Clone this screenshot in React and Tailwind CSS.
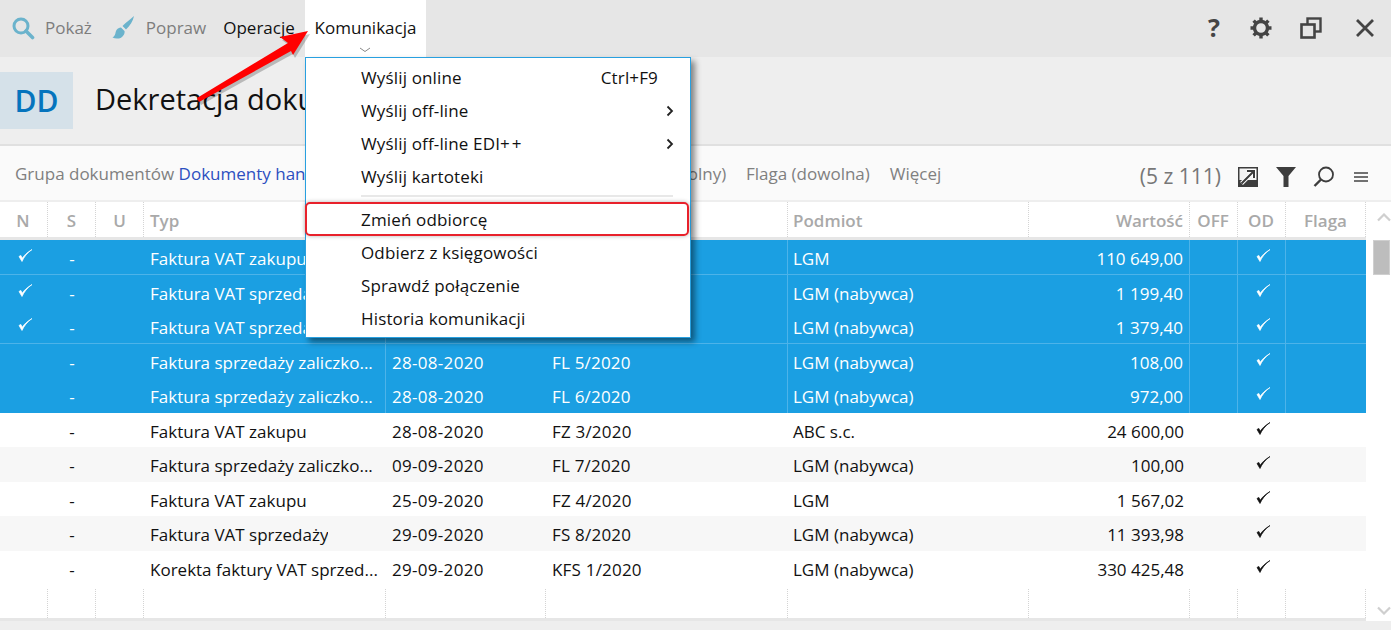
import React from "react";

const cols = "grid-cols-[48px_48px_48px_242px_160px_242px_241px_161px_48px_48px_80px]";
const rows = [
  ["✓","Faktura VAT zakupu","","","LGM","110 649,00",1,"b"],
  ["✓","Faktura VAT sprzedaży","","","LGM (nabywca)","1 199,40",1,""],
  ["✓","Faktura VAT sprzedaży","","","LGM (nabywca)","1 379,40",1,"b"],
  ["","Faktura sprzedaży zaliczko...","28-08-2020","FL 5/2020","LGM (nabywca)","108,00",1,""],
  ["","Faktura sprzedaży zaliczko...","28-08-2020","FL 6/2020","LGM (nabywca)","972,00",1,""],
  ["","Faktura VAT zakupu","28-08-2020","FZ 3/2020","ABC s.c.","24 600,00",0,""],
  ["","Faktura sprzedaży zaliczko...","09-09-2020","FL 7/2020","LGM (nabywca)","100,00",0,"a"],
  ["","Faktura VAT zakupu","25-09-2020","FZ 4/2020","LGM","1 567,02",0,""],
  ["","Faktura VAT sprzedaży","29-09-2020","FS 8/2020","LGM (nabywca)","11 393,98",0,"a"],
  ["","Korekta faktury VAT sprzed...","29-09-2020","KFS 1/2020","LGM (nabywca)","330 425,48",0,""],
];

const Check = ({ white }) => (
  <svg width="16" height="16" viewBox="0 0 16 16" className="-mt-[5px] ml-[3px]">
    <path d="M2 8.5 L5 13.5 C7 9 10 5 15 1.5 C10 4.5 7 7.5 5.3 10.2 L3.8 7.4 Z" fill={white ? "#fff" : "#111"} stroke={white ? "#fff" : "#111"} strokeWidth="0.7" strokeLinejoin="round" />
  </svg>
);

const Dotted = "border-r border-dotted border-[#d4d4d4]";

function Header() {
  const h = "flex items-center h-full pt-[3px] text-[17px] font-semibold text-[#a9a9a9] " + Dotted;
  return (
    <div className={`grid ${cols} h-[35px] w-[1366px] border-b-[3px] border-[#e6e6e6] box-content`}>
      <div className={`${h} justify-center pr-[1px]`}>N</div>
      <div className={`${h} justify-center`}>S</div>
      <div className={`${h} justify-center`}>U</div>
      <div className={`${h} pl-[6px]`}>Typ</div>
      <div className={h}></div>
      <div className={h}></div>
      <div className={`${h} pl-[5px]`}>Podmiot</div>
      <div className={`${h} justify-end pr-[6px]`}>Wartość</div>
      <div className={`${h} justify-center pr-[1px]`}>OFF</div>
      <div className={`${h} justify-center pr-[1px]`}>OD</div>
      <div className={`${h} justify-center`}>Flaga</div>
    </div>
  );
}

function Row({ r }) {
  const [n, typ, date, num, pod, val, sel, mod] = r;
  const bg = sel ? "bg-[#1b9fe2] text-white" : mod === "a" ? "bg-[#f7f7f7] text-[#111]" : "bg-white text-[#111]";
  const line = sel ? "border-r border-[#4db3e9]" : "";
  const bottom = mod === "b" ? "border-b border-[#4db3e9]" : "";
  return (
    <div className={`grid ${cols} h-[34.5px] items-stretch w-[1366px] text-[17px] ${bg} ${bottom}`}>
      <div className="flex items-center justify-center pt-[3px] pr-[1px]">{n && <Check white />}</div>
      <div className="flex items-center justify-center pt-[3px]">-</div>
      <div></div>
      <div className={`flex items-center pt-[3px] pl-[6px] ${line}`}><span className="whitespace-nowrap overflow-hidden">{typ}</span></div>
      <div className="flex items-center pt-[3px] pl-[6px] tracking-[0.3px]">{date}</div>
      <div className={`flex items-center pt-[3px] pl-[6px] tracking-[0.2px] ${line}`}>{num}</div>
      <div className="flex items-center pt-[3px] pl-[5px]">{pod}</div>
      <div className={`flex items-center justify-end pt-[3px] pr-[6px] ${line}`}>{val}</div>
      <div className={line}></div>
      <div className={`flex items-center justify-center pt-[3px] pr-[1px] ${line}`}><Check white={!!sel} /></div>
      <div></div>
    </div>
  );
}

const menu = [
  ["Wyślij online","Ctrl+F9"],
  ["Wyślij off-line",">"],
  [<>Wyślij off-line EDI<span className="tracking-[2px]">++</span></>,">"],
  ["Wyślij kartoteki",""],
];
const menu2 = ["Zmień odbiorcę","Odbierz z księgowości","Sprawdź połączenie","Historia komunikacji"];

function MenuItem({ label, right }) {
  return (
    <div className="flex items-center justify-between h-[33px] pl-[55px] pr-[16px] text-[17px] tracking-[0.15px] text-[#111]">
      <span>{label}</span>
      {right === ">" ? (
        <svg width="8" height="12" viewBox="0 0 8 12"><path d="M1.5 1.5 L6 6 L1.5 10.5" fill="none" stroke="#222" strokeWidth="1.8" /></svg>
      ) : (
        <span className="pr-[16px]">{right}</span>
      )}
    </div>
  );
}

export default function App() {
  return (
    <div className="relative w-[1391px] h-[630px] overflow-hidden bg-white font-['Open_Sans','Noto_Sans',sans-serif]">
      {/* top bar */}
      <div className="flex items-stretch h-[57px] bg-[#e6e6e6]">
        <div className="flex items-center w-[305px] h-full pb-[1px] text-[17px] whitespace-nowrap">
          <svg width="24" height="24" viewBox="0 0 24 24" className="ml-[11px]">
            <circle cx="10" cy="10" r="7" fill="none" stroke="#6bb3cc" strokeWidth="3" />
            <path d="M15 15 L21.5 21.5" stroke="#6bb3cc" strokeWidth="3.6" strokeLinecap="round" />
          </svg>
          <span className="ml-[10px] text-[#7d7d7d]">Pokaż</span>
          <svg width="24" height="24" viewBox="0 0 24 24" className="ml-[19px]">
            <path d="M23 0 C20 3 15 6 11.5 10 L15 13.5 C19 9.5 22 5 23 0 Z" fill="#6bb3cc" />
            <path d="M10 11.5 C6 12 5 14.5 4.5 17 C4 19.5 3 20.5 1.5 21.5 C5 23.5 11 23 13 18.5 C13.6 17 13.8 16 13.5 15 Z" fill="#6bb3cc" />
          </svg>
          <span className="ml-[11px] text-[#7d7d7d]">Popraw</span>
          <span className="ml-[17px] text-[#111]">Operacje</span>
        </div>
        <div className="relative w-[121px] bg-white flex justify-center items-center pb-[1px] text-[17px] text-[#111]">
          Komunikacja
          <svg width="12" height="6" viewBox="0 0 12 6" className="absolute left-[54px] top-[47px]">
            <path d="M1 1 L6 4.5 L11 1" fill="none" stroke="#888" strokeWidth="1" />
          </svg>
        </div>
        <div className="ml-auto flex items-center h-full pb-[1px]">
          <span className="w-[24px] text-center text-[25px] font-bold text-[#444]">?</span>
          <svg width="24" height="24" viewBox="0 0 24 24" className="ml-[23px]" fill="none">
            <circle cx="12" cy="12" r="6.5" stroke="#444" strokeWidth="3.4" />
            <path d="M12 1.5 V5 M12 19 V22.5 M1.5 12 H5 M19 12 H22.5 M4.6 4.6 L7 7 M17 17 L19.4 19.4 M19.4 4.6 L17 7 M7 17 L4.6 19.4" stroke="#444" strokeWidth="3.4" />
          </svg>
          <svg width="22" height="22" viewBox="0 0 22 22" className="ml-[27px]" fill="none">
            <rect x="7.5" y="1.5" width="13" height="13" stroke="#444" strokeWidth="2.4" />
            <rect x="1.5" y="7.5" width="13" height="13" fill="#e6e6e6" stroke="#444" strokeWidth="2.6" />
          </svg>
          <svg width="20" height="20" viewBox="0 0 20 20" className="ml-[33px] mr-[16px]">
            <path d="M2 2 L18 18 M18 2 L2 18" stroke="#444" strokeWidth="2.8" />
          </svg>
        </div>
      </div>

      {/* title */}
      <div className="flex h-[89px] pt-[15px] bg-[#eeeeee] border-b-2 border-[#e0e0e0]">
        <div className="flex items-center justify-center w-[73px] h-[57px] bg-[#d5e1e9] text-[#0574bd] text-[30px] font-semibold">DD</div>
        <div className="ml-[22px] h-[57px] pb-[3px] flex items-center text-[29px] text-[#111]">Dekretacja dokumentów</div>
      </div>

      {/* filter */}
      <div className="flex items-center h-[56px] bg-[#fafafa] border-b-2 border-[#eeeeee] text-[17px] text-[#808080]">
        <div className="pl-[15px] pt-[1px] whitespace-nowrap w-[640px] overflow-hidden">
          Grupa dokumentów <span className="text-[#2c4fc0]">Dokumenty handlowe</span>
        </div>
        <span className="ml-[9px] pt-[1px] whitespace-nowrap w-[78px]">(dowolny)</span>
        <span className="ml-[19px] pt-[1px] whitespace-nowrap">Flaga (dowolna)</span>
        <span className="ml-[20px] pt-[1px]">Więcej</span>
        <span className="ml-auto pt-[7px] text-[21px] text-[#777]">(5 z 111)</span>
        <svg width="20" height="20" viewBox="0 0 20 20" className="ml-[17px] mt-[8px]">
          <rect x="0.75" y="0.75" width="18.5" height="18.5" fill="#f4f4f4" stroke="#3d3d3d" strokeWidth="1.5" />
          <rect y="13" width="20" height="7" fill="#3d3d3d" />
          <path d="M3.5 16.5 L15.5 4.5 M9 4 H16 V11" fill="none" stroke="#fff" strokeWidth="4" />
          <path d="M3.5 16.5 L15.5 4.5 M9 4 H16 V11" fill="none" stroke="#3d3d3d" strokeWidth="2" />
        </svg>
        <svg width="20" height="20" viewBox="0 0 20 20" className="ml-[18px] mt-[8px]">
          <path d="M0 0 H20 L12.5 9 V20 H7.5 V9 Z" fill="#3d3d3d" />
        </svg>
        <svg width="22" height="22" viewBox="0 0 22 22" className="ml-[17px] mt-[8px]" fill="none" stroke="#3d3d3d">
          <circle cx="13" cy="8.5" r="7" strokeWidth="1.8" />
          <path d="M8 13.5 L1.5 20" strokeWidth="2.4" />
        </svg>
        <svg width="14" height="12" viewBox="0 0 14 12" className="ml-[19px] mr-[23px] mt-[8px]" stroke="#444" strokeWidth="1.6">
          <path d="M0 2 H14 M0 6 H14 M0 10 H14" />
        </svg>
      </div>

      {/* table */}
      <div className="flex">
        <div className="w-[1366px]">
          <Header />
          {rows.map((r, i) => <Row key={i} r={r} />)}
          <div className={`grid ${cols} h-[36px] border-b-[3px] border-[#e6e6e6]`}>
            {[0,1,2,3,4,5,6,7,8,9,10].map((i) => <div key={i} className={`${Dotted} mt-[4px]`} />)}
          </div>
        </div>
        <div className="relative flex-1">
          <svg width="14" height="9" viewBox="0 0 14 9" className="absolute left-[11px] top-[11px]">
            <path d="M1 7.5 L7 1.5 L13 7.5" fill="none" stroke="#cfcfcf" strokeWidth="2.2" />
          </svg>
          <div className="absolute left-[7px] top-[38px] w-[17px] h-[35px] bg-[#bdbdbd] border border-[#cfcfcf]" />
          <svg width="14" height="9" viewBox="0 0 14 9" className="absolute left-[11px] top-[404px]">
            <path d="M1 1.5 L7 7.5 L13 1.5" fill="none" stroke="#cfcfcf" strokeWidth="2.2" />
          </svg>
        </div>
      </div>
      <div className="h-[12px] bg-[#eeeeee]" />

      {/* dropdown */}
      <div className="absolute left-[305px] top-[57px] w-[386px] h-[281px] pt-[3px] bg-white border border-[#28a0e0] shadow-[4px_4px_6px_rgba(0,0,0,0.45)]">
        {menu.map(([l, rr], i) => <MenuItem key={i} label={l} right={rr} />)}
        <div className="ml-[55px] mr-[17px] mt-[2px] mb-[6px] h-[2px] bg-[#e8e8e8]" />
        {menu2.map((l) => <MenuItem key={l} label={l} />)}
      </div>
      {/* highlight */}
      <div className="absolute left-[305px] top-[202px] w-[384px] h-[34px] rounded-[5px] border-2 border-[#e8212b] shadow-[0_0_4px_rgba(0,0,0,0.3)]" />

      {/* arrow */}
      <svg width="1391" height="630" viewBox="0 0 1391 630" className="absolute left-0 top-0 pointer-events-none">
        <path d="M308 31 L280 37 L288 43 L197 98 L199 102 L291 51 L293 55 Z" fill="#000" opacity="0.22" transform="translate(2,3)" />
        <path d="M308 31 L280 37 L288 43 L197 98 L199 102 L291 51 L293 55 Z" fill="#ff0000" />
      </svg>
    </div>
  );
}
